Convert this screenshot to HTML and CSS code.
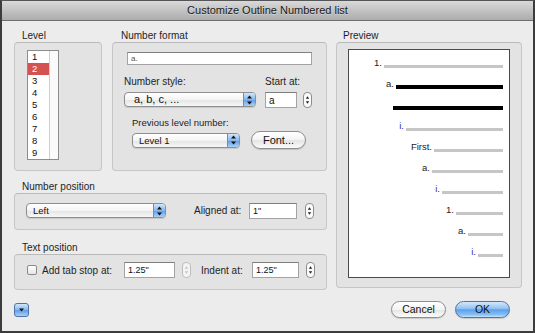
FILE: index.html
```html
<!DOCTYPE html>
<html lang="en">
<head>
    <meta charset="UTF-8">
    <title>Customize Outline Numbered list</title>
    <link rel="stylesheet" href="styles.css">
</head>
<body>
    <div class="window">
        <div class="titlebar">Customize Outline Numbered list</div>
        <div class="content">
            <div class="main">
                <div class="left">
                    <div class="top-row">
                        <div class="group level-group">
                            <div class="group-label">Level</div>
                            <div class="box level-box">
                                <div class="listbox">
                                    <ul class="list">
                                        <li>1</li>
                                        <li class="selected">2</li>
                                        <li>3</li>
                                        <li>4</li>
                                        <li>5</li>
                                        <li>6</li>
                                        <li>7</li>
                                        <li>8</li>
                                        <li>9</li>
                                    </ul>
                                    <div class="list-track"></div>
                                </div>
                            </div>
                        </div>
                        <div class="group format-group">
                            <div class="group-label">Number format</div>
                            <div class="box format-box">
                                <div class="textfield format-field">a.</div>
                                <div class="style-row">
                                    <div class="style-col">
                                        <div class="field-label">Number style:</div>
                                        <div class="popup style-popup">
                                            <span class="popup-text">a, b, c, ...</span>
                                            <span class="popup-cap">
                                                <svg width="7" height="10" viewBox="0 0 7 10"><path d="M3.5 0.5L6 3.6H1Z M3.5 9.5L6 6.4H1Z" fill="#111"/></svg>
                                            </span>
                                        </div>
                                    </div>
                                    <div class="start-col">
                                        <div class="field-label">Start at:</div>
                                        <div class="spin">
                                            <div class="textfield start-field">a</div>
                                            <svg class="stepper" width="9" height="16" viewBox="0 0 9 16"><rect x="0.5" y="0.5" width="8" height="15" rx="3.5" fill="#fbfbfb" stroke="#8c8c8c"/><path d="M4.5 4.3L6.2 6.8H2.8Z M4.5 11.7L6.2 9.2H2.8Z" fill="#222"/></svg>
                                        </div>
                                    </div>
                                </div>
                                <div class="field-label prev-label">Previous level number:</div>
                                <div class="prev-row">
                                    <div class="popup level-popup">
                                        <span class="popup-text">Level 1</span>
                                        <span class="popup-cap">
                                            <svg width="7" height="10" viewBox="0 0 7 10"><path d="M3.5 0.5L6 3.6H1Z M3.5 9.5L6 6.4H1Z" fill="#111"/></svg>
                                        </span>
                                    </div>
                                    <div class="push font-button">Font...</div>
                                </div>
                            </div>
                        </div>
                    </div>

                    <div class="group position-group">
                        <div class="group-label">Number position</div>
                        <div class="box row-box position-box">
                            <div class="popup left-popup">
                                <span class="popup-text">Left</span>
                                <span class="popup-cap">
                                    <svg width="7" height="10" viewBox="0 0 7 10"><path d="M3.5 0.5L6 3.6H1Z M3.5 9.5L6 6.4H1Z" fill="#111"/></svg>
                                </span>
                            </div>
                            <span class="row-label aligned-label">Aligned at:</span>
                            <div class="textfield aligned-field">1"</div>
                            <svg class="stepper stepper-gap" width="9" height="16" viewBox="0 0 9 16"><rect x="0.5" y="0.5" width="8" height="15" rx="3.5" fill="#fbfbfb" stroke="#8c8c8c"/><path d="M4.5 4.3L6.2 6.8H2.8Z M4.5 11.7L6.2 9.2H2.8Z" fill="#222"/></svg>
                        </div>
                    </div>

                    <div class="group text-group">
                        <div class="group-label">Text position</div>
                        <div class="box row-box text-box">
                            <span class="checkbox"></span>
                            <span class="row-label tab-label">Add tab stop at:</span>
                            <div class="textfield tab-field">1.25"</div>
                            <svg class="stepper stepper-near" width="9" height="16" viewBox="0 0 9 16"><rect x="0.5" y="0.5" width="8" height="15" rx="3.5" fill="#f4f4f4" stroke="#bdbdbd"/><path d="M4.5 4.3L6.2 6.8H2.8Z M4.5 11.7L6.2 9.2H2.8Z" fill="#c2c2c2"/></svg>
                            <span class="row-label indent-label">Indent at:</span>
                            <div class="textfield indent-field">1.25"</div>
                            <svg class="stepper stepper-near" width="9" height="16" viewBox="0 0 9 16"><rect x="0.5" y="0.5" width="8" height="15" rx="3.5" fill="#fbfbfb" stroke="#8c8c8c"/><path d="M4.5 4.3L6.2 6.8H2.8Z M4.5 11.7L6.2 9.2H2.8Z" fill="#222"/></svg>
                        </div>
                    </div>
                </div>

                <div class="group preview-group">
                    <div class="group-label">Preview</div>
                    <div class="box preview-box">
                        <div class="page">
                            <div class="pv-row"><span class="pv-num">1.</span><span class="pv-bar" style="width: 119px"></span></div>
                            <div class="pv-row"><span class="pv-num">a.</span><span class="pv-bar dark" style="width: 107px"></span></div>
                            <div class="pv-row"><span class="pv-bar dark" style="width: 110px"></span></div>
                            <div class="pv-row"><span class="pv-num roman">i.</span><span class="pv-bar" style="width: 97px"></span></div>
                            <div class="pv-row"><span class="pv-num">First.</span><span class="pv-bar" style="width: 69px"></span></div>
                            <div class="pv-row"><span class="pv-num">a.</span><span class="pv-bar" style="width: 71px"></span></div>
                            <div class="pv-row"><span class="pv-num roman">i.</span><span class="pv-bar" style="width: 61px"></span></div>
                            <div class="pv-row"><span class="pv-num">1.</span><span class="pv-bar" style="width: 47px"></span></div>
                            <div class="pv-row"><span class="pv-num">a.</span><span class="pv-bar" style="width: 35px"></span></div>
                            <div class="pv-row"><span class="pv-num roman">i.</span><span class="pv-bar" style="width: 25px"></span></div>
                        </div>
                    </div>
                </div>
            </div>

            <div class="footer">
                <div class="disclosure">
                    <svg width="5" height="4" viewBox="0 0 5 4"><path d="M0 0.5H5L2.5 3.5Z" fill="#111"/></svg>
                </div>
                <div class="footer-buttons">
                    <div class="push">Cancel</div>
                    <div class="push default">OK</div>
                </div>
            </div>
        </div>
    </div>
</body>
</html>
```

FILE: styles.css
```css
* {
    box-sizing: border-box;
}
body {
    margin: 0;
    background: #ececec;
    font-family: 'Liberation Sans', Arial, sans-serif;
    color: #1e1e1e;
}
.window {
    width: 535px;
    height: 333px;
    background: #ececec;
    border: 2px solid #3c3c3c;
    border-top: 1px solid #555555;
}
.titlebar {
    height: 20px;
    line-height: 19px;
    text-align: center;
    font-size: 11px;
    color: #1a1a1a;
    background: linear-gradient(#d9d9d9, #acacac);
    border-bottom: 1px solid #6f6f6f;
    text-shadow: 0 1px 0 rgba(255, 255, 255, 0.35);
}
.content {
    padding: 9px 11px 0 12px;
}
.main {
    display: grid;
    grid-template-columns: 313px 186px;
    column-gap: 9px;
    align-items: start;
}

/* group boxes */
.group-label {
    height: 12px;
    line-height: 12px;
    font-size: 10px;
    padding-left: 8px;
}
.box {
    background: #e3e3e3;
    border: 1px solid #c6c6c6;
    border-top-color: #b9b9b9;
    border-radius: 4px;
}
.top-row {
    display: flex;
    gap: 10px;
}
.level-group {
    width: 88px;
}
.format-group {
    width: 215px;
}
.format-group .group-label {
    padding-left: 9px;
}
.level-box {
    height: 129px;
    padding: 7px 0 0 12px;
}
.format-box {
    height: 129px;
    padding: 9px 14px 0 11px;
}

/* level list */
.listbox {
    display: flex;
    width: 32px;
    height: 110px;
    border: 1px solid #8c8c8c;
    background: #ffffff;
}
.list {
    list-style: none;
    margin: 0;
    padding: 0;
    width: 21px;
}
.list li {
    height: 12px;
    line-height: 12px;
    font-size: 9.5px;
    padding-left: 4px;
    color: #111111;
}
.list li.selected {
    background: #d4524f;
    color: #ffffff;
}
.list-track {
    flex: 1;
    border-left: 1px solid #cfcfcf;
    background: #fafafa;
}

/* fields and controls */
.textfield {
    display: flex;
    align-items: center;
    background: #ffffff;
    border: 1px solid #a3a3a3;
    border-top-color: #7e7e7e;
    font-size: 9px;
    padding-left: 3px;
    color: #111111;
}
.format-field {
    width: 185px;
    height: 13px;
    margin-left: 3px;
    font-size: 8px;
    color: #555555;
}
.field-label {
    height: 12px;
    line-height: 12px;
    font-size: 10px;
    margin-bottom: 4px;
}
.style-row {
    display: flex;
    gap: 9px;
    margin-top: 11px;
}
.style-col {
    width: 133px;
}
.spin {
    display: flex;
    align-items: center;
    gap: 6px;
}
.start-field {
    width: 32px;
    height: 16px;
    font-size: 10px;
}
.stepper {
    display: block;
    flex-shrink: 0;
}
.prev-label {
    margin-top: 9px;
    margin-bottom: 2px;
    padding-left: 8px;
    font-size: 9.5px;
}
.prev-row {
    display: flex;
    align-items: center;
    gap: 11px;
    padding-left: 8px;
}

.popup {
    display: flex;
    height: 15px;
    border: 1px solid #8e8e8e;
    border-radius: 4px;
    background: linear-gradient(#ffffff, #f4f4f4 50%, #e4e4e4 51%, #f7f7f7);
    box-shadow: 0 1px 1px rgba(0, 0, 0, 0.12);
    overflow: hidden;
}
.popup-text {
    flex: 1;
    line-height: 13px;
    font-size: 9.5px;
    padding-left: 6px;
    color: #111111;
}
.popup-cap {
    width: 12px;
    display: flex;
    align-items: center;
    justify-content: center;
    border-left: 1px solid #6c8dba;
    background: linear-gradient(#d2e5fa, #86b7ee 50%, #5f9ce3 51%, #a9cff6);
}
.style-popup {
    margin-top: 1px;
}
.style-popup .popup-text {
    font-size: 11px;
    padding-left: 9px;
}
.level-popup {
    width: 108px;
}
.left-popup {
    width: 140px;
}

.push {
    height: 17px;
    width: 55px;
    line-height: 15px;
    text-align: center;
    font-size: 10.5px;
    color: #111111;
    border: 1px solid #8d8d8d;
    border-radius: 9px;
    background: linear-gradient(#ffffff, #f3f3f3 50%, #e4e4e4 51%, #fbfbfb);
    box-shadow: 0 1px 1px rgba(0, 0, 0, 0.15);
}
.push.default {
    border-color: #4f75a8;
    background: linear-gradient(#d5e8fc, #8fc0f3 45%, #5c9fe9 52%, #86c0f6 85%, #c9e4fd);
}
.font-button {
    height: 18px;
    font-size: 11px;
    line-height: 16px;
}

/* single line groups */
.position-group {
    margin-top: 10px;
}
.text-group {
    margin-top: 12px;
}
.row-box {
    display: flex;
    align-items: center;
}
.row-label {
    font-size: 10px;
}
.position-box {
    height: 37px;
    padding: 0 0 2px 11px;
}
.aligned-label {
    margin-left: 28px;
    width: 55px;
}
.aligned-field {
    width: 48px;
    height: 16px;
}
.stepper-gap {
    margin-left: 8px;
}
.text-box {
    height: 36px;
    padding: 0 0 4px 12px;
}
.checkbox {
    width: 10px;
    height: 10px;
    margin-right: 5px;
    border: 1px solid #8a8a8a;
    border-radius: 2px;
    background: linear-gradient(#ffffff, #e6e6e6);
}
.tab-label {
    width: 82px;
}
.tab-field {
    width: 51px;
    height: 16px;
}
.stepper-near {
    margin-left: 7px;
}
.indent-label {
    margin-left: 10px;
    width: 51px;
}
.indent-field {
    width: 47px;
    height: 16px;
}

/* preview */
.preview-group .group-label {
    padding-left: 7px;
}
.preview-box {
    height: 246px;
    padding: 6px 11px 9px 11px;
}
.page {
    height: 100%;
    background: #ffffff;
    border: 1px solid #4a4a4a;
    padding: 2px 6px 0 0;
}
.pv-row {
    display: flex;
    justify-content: flex-end;
    align-items: center;
    height: 21px;
}
.pv-num {
    font-size: 9.5px;
    line-height: 10px;
    margin-right: 2px;
    color: #222222;
}
.pv-num.roman {
    color: #2b2b9c;
}
.pv-bar {
    height: 3px;
    margin-top: 7px;
    background: #c6c6c6;
}
.pv-bar.dark {
    height: 4px;
    margin-top: 6px;
    background: #000000;
}

/* footer */
.footer {
    display: flex;
    align-items: center;
    height: 17px;
    margin-top: 11px;
    padding-right: 12px;
}
.disclosure {
    width: 15px;
    height: 14px;
    display: flex;
    align-items: center;
    justify-content: center;
    border: 1px solid #4f72a8;
    border-radius: 3px;
    background: linear-gradient(#d2e6fb, #84b6ee 50%, #5e9ce3 51%, #a9d0f7);
}
.footer-buttons {
    margin-left: auto;
    display: flex;
    gap: 9px;
}
```
